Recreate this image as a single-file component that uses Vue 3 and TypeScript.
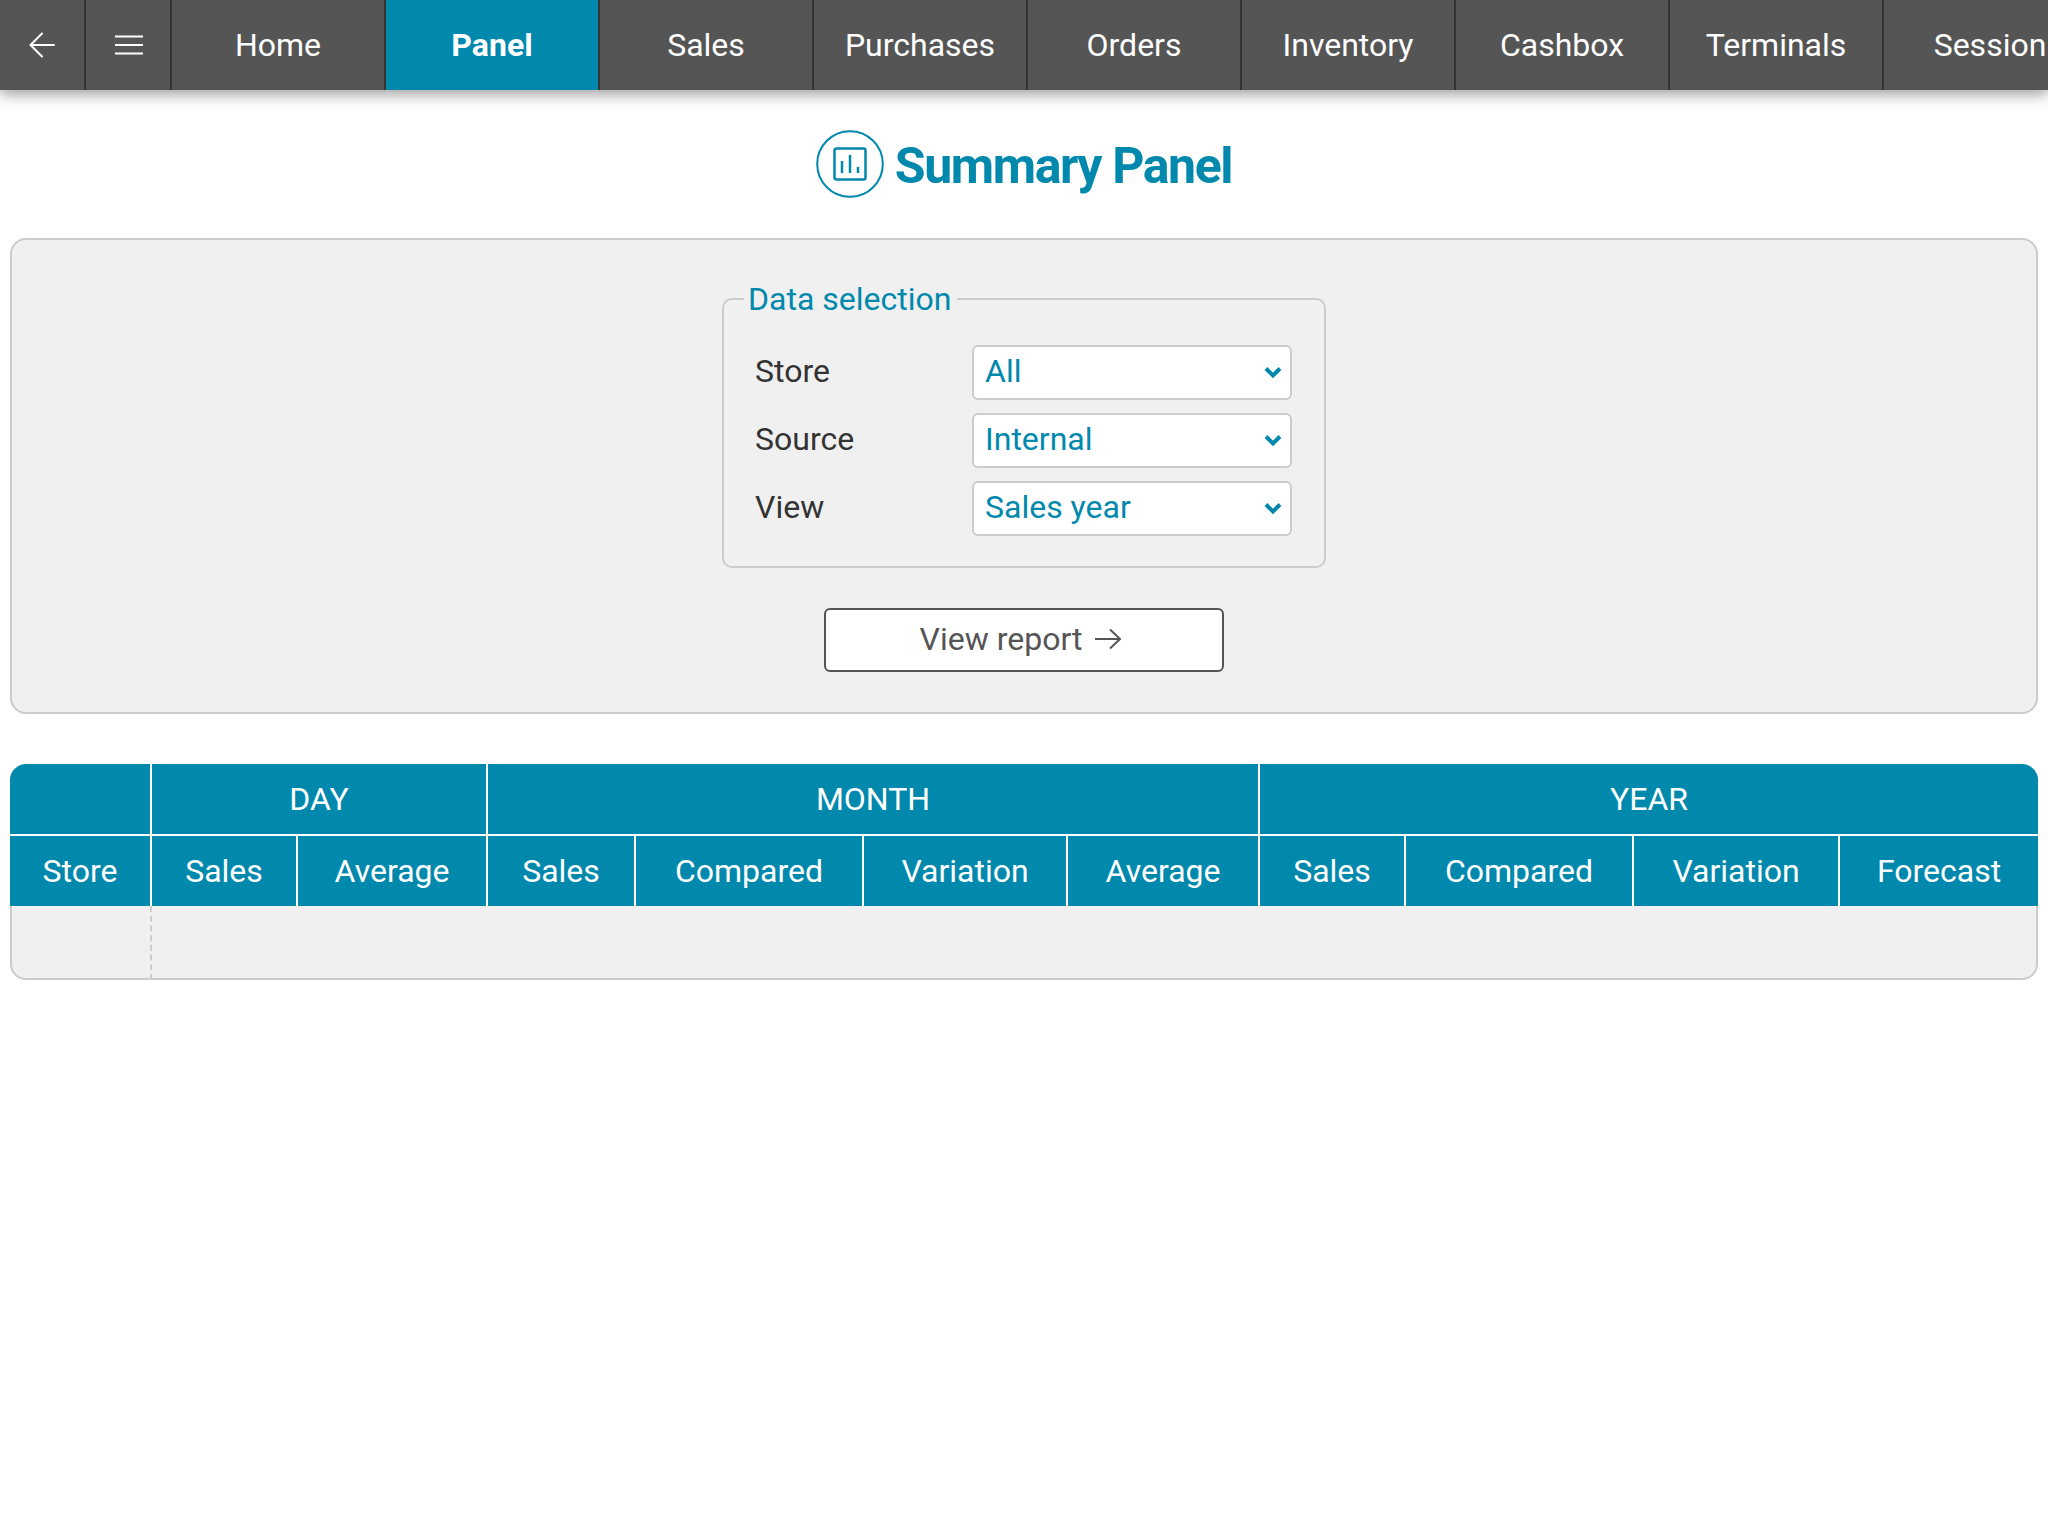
<template>
  <div class="page">
    <nav class="topbar">
      <button class="topbar__icon" type="button" aria-label="Back">
        <svg width="26" height="26" viewBox="0 0 26 26" fill="none" stroke="#fff" stroke-width="2" stroke-linecap="round" stroke-linejoin="round">
          <path d="M25 13H1.500M13 1.500 1.500 13 13 24.500" />
        </svg>
      </button>
      <button class="topbar__icon topbar__icon--menu" type="button" aria-label="Menu">
        <svg width="28" height="20" viewBox="0 0 28 20" fill="none" stroke="#fff" stroke-width="2">
          <path d="M0 1.500h28M0 10h28M0 18.500h28" />
        </svg>
      </button>
      <a
        v-for="item in navItems"
        :key="item"
        class="topbar__item"
        :class="{ 'topbar__item--active': item === 'Panel' }"
      >{{ item }}</a>
    </nav>

    <h1 class="page-title">
      <svg class="page-title__icon" width="68" height="68" viewBox="0 0 68 68" fill="none" stroke="#0088ad" stroke-width="2.500">
        <circle cx="34" cy="34" r="32.800" stroke-width="2" />
        <rect x="18.500" y="18.500" width="31" height="31" rx="2" />
        <path d="M26 43V31M34 43V25M42 43V37" />
      </svg>
      <span>Summary Panel</span>
    </h1>

    <section class="filters">
      <fieldset class="selection">
        <legend>Data selection</legend>
        <div v-for="field in fields" :key="field.label" class="selection__row">
          <label>{{ field.label }}</label>
          <div class="select">
            <span>{{ field.value }}</span>
            <svg width="18" height="13" viewBox="0 0 18 13" fill="none" stroke="#0088ad" stroke-width="4">
              <path d="M2 2.500 9 9.500l7-7" />
            </svg>
          </div>
        </div>
      </fieldset>
      <button class="report-btn" type="button">
        <span>View report</span>
        <svg width="28" height="22" viewBox="0 0 28 22" fill="none" stroke="#555" stroke-width="2">
          <path d="M1 11h25M16 1.500 26 11 16 20.500" />
        </svg>
      </button>
    </section>

    <table class="summary">
      <colgroup>
        <col v-for="(w, i) in colWidths" :key="i" :style="{ width: w + 'px' }" />
      </colgroup>
      <thead>
        <tr>
          <th></th>
          <th colspan="2">DAY</th>
          <th colspan="4">MONTH</th>
          <th colspan="4">YEAR</th>
        </tr>
        <tr>
          <th v-for="(col, i) in columns" :key="i">{{ col }}</th>
        </tr>
      </thead>
      <tbody>
        <tr>
          <td class="summary__store"></td>
          <td colspan="10"></td>
        </tr>
      </tbody>
    </table>
  </div>
</template>

<script setup lang="ts">
const navItems = ['Home', 'Panel', 'Sales', 'Purchases', 'Orders', 'Inventory', 'Cashbox', 'Terminals', 'Session']

const fields = [
  { label: 'Store', value: 'All' },
  { label: 'Source', value: 'Internal' },
  { label: 'View', value: 'Sales year' },
]

const columns = ['Store', 'Sales', 'Average', 'Sales', 'Compared', 'Variation', 'Average', 'Sales', 'Compared', 'Variation', 'Forecast']
const colWidths = [142, 146, 190, 148, 228, 204, 192, 146, 228, 206, 198]
</script>

<style>
html,
body {
  margin: 0;
  background: #fff;
}
</style>

<style scoped>
.page {
  width: 2048px;
  height: 1536px;
  overflow: hidden;
  box-sizing: border-box;
  font-family: Roboto, 'Liberation Sans', sans-serif;
  font-size: 32px;
  color: #333;
}

.topbar {
  display: flex;
  height: 90px;
  background: #555;
  box-shadow: 0 4px 14px rgba(0, 0, 0, 0.4);
  overflow: hidden;
  position: relative;
}

.topbar__icon {
  flex: none;
  width: 86px;
  padding: 0;
  background: none;
  border: 0;
  border-right: 2px solid #333;
  display: flex;
  align-items: center;
  justify-content: center;
}

.topbar__icon--menu {
  padding-left: 2px;
}

.topbar__item {
  flex: none;
  width: 214px;
  box-sizing: border-box;
  border-right: 2px solid #333;
  color: #fff;
  line-height: 90px;
  text-align: center;
  white-space: nowrap;
}

.topbar__item--active {
  background: #0088ad;
  font-weight: 700;
}

.page-title {
  margin: 0;
  height: 148px;
  display: flex;
  align-items: center;
  justify-content: center;
  gap: 11px;
  color: #0088ad;
  font-size: 50px;
  font-weight: 700;
  letter-spacing: -1.4px;
}

.page-title span {
  padding-top: 4px;
}

.filters {
  margin: 0 10px;
  height: 476px;
  box-sizing: border-box;
  background: #f0f0f0;
  border: 2px solid #ccc;
  border-radius: 16px;
  padding-top: 41px;
  display: flex;
  flex-direction: column;
  align-items: center;
}

.selection {
  width: 604px;
  height: 287px;
  box-sizing: border-box;
  margin: 0;
  padding: 28px 32px 0 31px;
  border: 2px solid #ccc;
  border-radius: 10px;
}

.selection legend {
  padding: 0 6px 0 4px;
  margin-left: -11px;
  color: #0088ad;
  line-height: 36px;
}

.selection__row {
  display: flex;
  align-items: center;
  justify-content: space-between;
  height: 55px;
  margin-bottom: 13px;
}

.selection__row label,
.select span {
  padding-bottom: 3px;
}

.select {
  width: 320px;
  height: 55px;
  box-sizing: border-box;
  padding: 0 8px 0 11px;
  background: #fff;
  border: 2px solid #ccc;
  border-radius: 6px;
  color: #0088ad;
  display: flex;
  align-items: center;
  justify-content: space-between;
}

.report-btn {
  margin-top: 40px;
  width: 400px;
  height: 64px;
  padding: 0 6px 2px 0;
  background: #fff;
  border: 2px solid #555;
  border-radius: 6px;
  color: #555;
  font: inherit;
  display: flex;
  align-items: center;
  justify-content: center;
  gap: 12px;
}

.summary {
  margin: 50px 10px 0;
  width: 2028px;
  table-layout: fixed;
  border-collapse: separate;
  border-spacing: 0;
}

.summary th {
  height: 70px;
  padding: 0;
  background: #0088ad;
  color: #fff;
  font-weight: 400;
  border-right: 2px solid #fff;
  box-sizing: border-box;
}

.summary thead tr:first-child th {
  height: 72px;
  border-bottom: 2px solid #fff;
}

.summary th:last-child {
  border-right: 0;
}

.summary thead tr:first-child th:first-child {
  border-top-left-radius: 16px;
}

.summary thead tr:first-child th:last-child {
  border-top-right-radius: 16px;
}

.summary td {
  height: 74px;
  padding: 0;
  box-sizing: border-box;
  background: #f0f0f0;
  border-bottom: 2px solid #ccc;
}

.summary td:first-child {
  border-left: 2px solid #ccc;
  border-bottom-left-radius: 16px;
  border-right: 2px dashed #ccc;
}

.summary td:last-child {
  border-right: 2px solid #ccc;
  border-bottom-right-radius: 16px;
}
</style>
